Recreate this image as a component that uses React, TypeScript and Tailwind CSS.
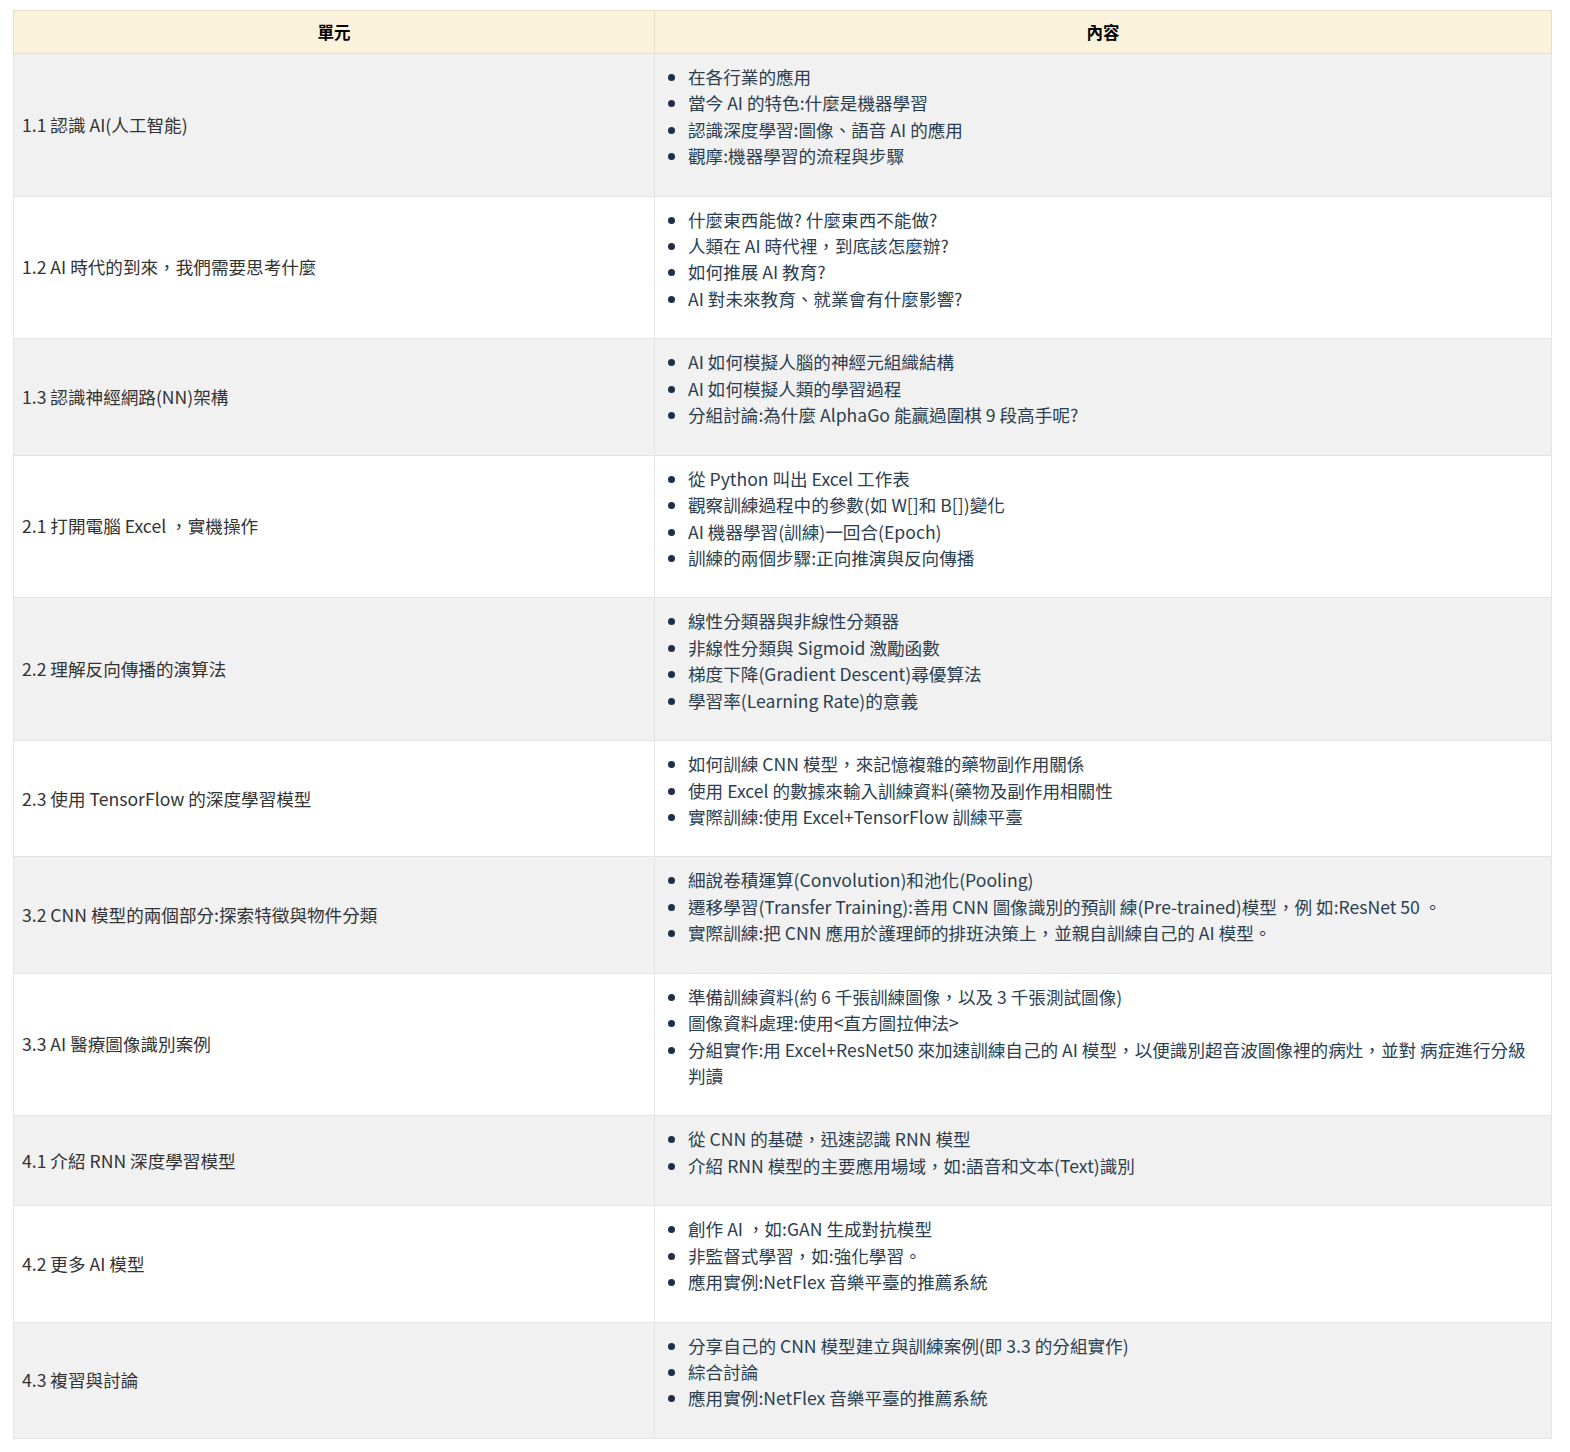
import React from "react";

const rows: { unit: string; items: string[] }[] = [
  {
    unit: "1.1 認識 AI(人工智能)",
    items: ["在各行業的應用", "當今 AI 的特色:什麼是機器學習", "認識深度學習:圖像、語音 AI 的應用", "觀摩:機器學習的流程與步驟"],
  },
  {
    unit: "1.2 AI 時代的到來，我們需要思考什麼",
    items: ["什麼東西能做? 什麼東西不能做?", "人類在 AI 時代裡，到底該怎麼辦?", "如何推展 AI 教育?", "AI 對未來教育、就業會有什麼影響?"],
  },
  {
    unit: "1.3 認識神經網路(NN)架構",
    items: ["AI 如何模擬人腦的神經元組織結構", "AI 如何模擬人類的學習過程", "分組討論:為什麼 AlphaGo 能贏過圍棋 9 段高手呢?"],
  },
  {
    unit: "2.1 打開電腦 Excel ，實機操作",
    items: ["從 Python 叫出 Excel 工作表", "觀察訓練過程中的參數(如 W[]和 B[])變化", "AI 機器學習(訓練)一回合(Epoch)", "訓練的兩個步驟:正向推演與反向傳播"],
  },
  {
    unit: "2.2 理解反向傳播的演算法",
    items: ["線性分類器與非線性分類器", "非線性分類與 Sigmoid 激勵函數", "梯度下降(Gradient Descent)尋優算法", "學習率(Learning Rate)的意義"],
  },
  {
    unit: "2.3 使用 TensorFlow 的深度學習模型",
    items: ["如何訓練 CNN 模型，來記憶複雜的藥物副作用關係", "使用 Excel 的數據來輸入訓練資料(藥物及副作用相關性", "實際訓練:使用 Excel+TensorFlow 訓練平臺"],
  },
  {
    unit: "3.2 CNN 模型的兩個部分:探索特徵與物件分類",
    items: [
      "細說卷積運算(Convolution)和池化(Pooling)",
      "遷移學習(Transfer Training):善用 CNN 圖像識別的預訓 練(Pre-trained)模型，例 如:ResNet 50 。",
      "實際訓練:把 CNN 應用於護理師的排班決策上，並親自訓練自己的 AI 模型。",
    ],
  },
  {
    unit: "3.3 AI 醫療圖像識別案例",
    items: [
      "準備訓練資料(約 6 千張訓練圖像，以及 3 千張測試圖像)",
      "圖像資料處理:使用<直方圖拉伸法>",
      "分組實作:用 Excel+ResNet50 來加速訓練自己的 AI 模型，以便識別超音波圖像裡的病灶，並對 病症進行分級判讀",
    ],
  },
  {
    unit: "4.1 介紹 RNN 深度學習模型",
    items: ["從 CNN 的基礎，迅速認識 RNN 模型", "介紹 RNN 模型的主要應用場域，如:語音和文本(Text)識別"],
  },
  {
    unit: "4.2 更多 AI 模型",
    items: ["創作 AI ，如:GAN 生成對抗模型", "非監督式學習，如:強化學習。", "應用實例:NetFlex 音樂平臺的推薦系統"],
  },
  {
    unit: "4.3 複習與討論",
    items: ["分享自己的 CNN 模型建立與訓練案例(即 3.3 的分組實作)", "綜合討論", "應用實例:NetFlex 音樂平臺的推薦系統"],
  },
];

export default function App() {
  return (
    <div
      className="min-h-[1452px] bg-white pt-[10px] pl-[13px]"
      style={{ fontFamily: '"Noto Sans CJK TC", "Noto Sans", sans-serif' }}
    >
      <table className="w-[1539px] table-fixed border-collapse text-[17.6px] leading-[1.5]">
        <colgroup>
          <col className="w-[641px]" />
          <col />
        </colgroup>
        <thead>
          <tr className="bg-[#fbf2dc]">
            <th className="h-[43px] border border-[#e8dcc2] px-[9px] text-center text-[16.5px] font-bold text-black">單元</th>
            <th className="h-[43px] border border-[#e8dcc2] px-[9px] text-center text-[16.5px] font-bold text-black">內容</th>
          </tr>
        </thead>
        <tbody>
          {rows.map((r, i) => (
            <tr key={r.unit} className={i % 2 === 0 ? "bg-[#f1f1f1]" : "bg-white"}>
              <td className="border border-[#e4e4e4] px-[8px] py-[10px] align-middle text-[#333333]">{r.unit}</td>
              <td className="border border-[#e4e4e4] px-[9px] py-[10px] align-middle text-[#2c3e50]">
                <ul className="mb-[16.15px] list-disc pl-[24px] marker:text-[#1e2f48]">
                  {r.items.map((it) => (
                    <li key={it}>{it}</li>
                  ))}
                </ul>
              </td>
            </tr>
          ))}
        </tbody>
      </table>
    </div>
  );
}
